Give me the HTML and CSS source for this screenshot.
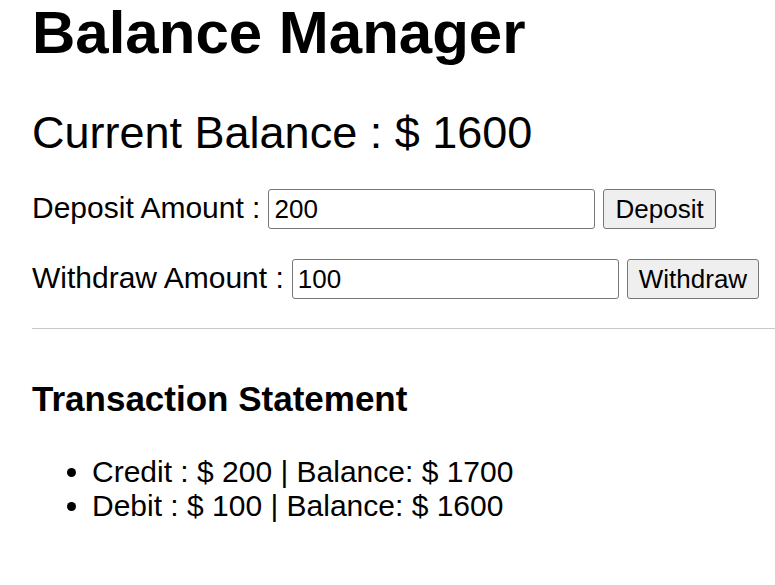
FILE: index.html
```html
<!DOCTYPE html>
<html lang="en">
<head>
<meta charset="utf-8">
<title>Balance Manager</title>
<link rel="stylesheet" href="styles.css">
</head>
<body>
<main class="app">
<h1 class="title">Balance Manager</h1>
<p class="balance">Current Balance : $ 1600</p>
<form class="row">
<label for="deposit">Deposit Amount :</label>
<input class="amount" id="deposit" type="text" value="200">
<button class="action" type="button">Deposit</button>
</form>
<form class="row">
<label for="withdraw">Withdraw Amount :</label>
<input class="amount" id="withdraw" type="text" value="100">
<button class="action" type="button">Withdraw</button>
</form>
<hr class="divider">
<h2 class="subtitle">Transaction Statement</h2>
<ul class="transactions">
<li>Credit : $ 200 | Balance: $ 1700</li>
<li>Debit : $ 100 | Balance: $ 1600</li>
</ul>
</main>
</body>
</html>
```
FILE: styles.css
```css
* { box-sizing: border-box; }
body {
  margin: 0;
  background: #fff;
  color: #000;
  font: 30px/34px "Liberation Sans", Arial, sans-serif;
}
.app { padding-left: 32px; }
.title { margin: 0; font-size: 60px; line-height: 66px; }
.balance { margin: 41px 0 30px; font-size: 45px; line-height: 52px; }
.row { display: flex; align-items: stretch; gap: 8px; white-space: nowrap; }
.row label { padding-top: 2px; }
.row + .row { margin-top: 30px; }
.amount {
  width: 327px;
  height: 40px;
  padding: 0 5px;
  border: 1px solid #767676;
  border-radius: 3px;
  background: #fff;
  color: #000;
  font: inherit;
  font-size: 26px;
}
.action {
  height: 40px;
  padding: 0 11px;
  border: 1px solid #767676;
  border-radius: 3px;
  background: #efefef;
  color: #000;
  font: inherit;
  font-size: 26px;
}
.divider { margin: 29px 0 0; border: 0; border-top: 1px solid #c8c8c8; }
.subtitle { margin: 50px 0 36px; font-size: 35px; line-height: 40px; }
.transactions { margin: 0; padding-left: 60px; }
```
